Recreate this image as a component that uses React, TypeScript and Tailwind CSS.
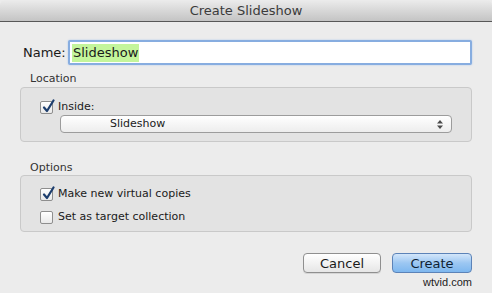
import React from "react";

const font = { fontFamily: '"DejaVu Sans", "Liberation Sans", sans-serif' };

const Check = ({ checked }: { checked: boolean }) => (
  <div className="relative w-[13px] h-[13px] rounded-[2px] border border-[#8e8e8e] bg-gradient-to-b from-white to-[#e9e9e9] shadow-[inset_0_1px_0_#fff]">
    {checked && (
      <svg
        className="absolute left-[1px] top-[-3px]"
        width="13"
        height="14"
        viewBox="0 0 13 14"
      >
        <path
          d="M2 8.5 L5 12 L11.5 1.5"
          fill="none"
          stroke="#1d3e6e"
          strokeWidth="2.2"
          strokeLinecap="round"
          strokeLinejoin="round"
        />
      </svg>
    )}
  </div>
);

export default function App() {
  return (
    <div className="w-[492px] h-[293px] bg-[#ececec] text-[#1a1a1a] overflow-hidden" style={font}>
      <div className="h-[22px] flex items-center justify-center bg-gradient-to-b from-[#ececec] to-[#c4c4c4] border-b border-[#585858] rounded-t-[5px]">
        <span className="text-[13px] text-[#3b3b3b] leading-none">Create Slideshow</span>
      </div>

      <div className="px-[20px]">
        <div className="flex items-center mt-[18px] h-[25px]">
          <span className="ml-[3px] w-[45px] text-[13px]">Name:</span>
          <div className="flex-1 h-[25px] border-[2px] border-[#87ade0] rounded-[2px] bg-white flex items-center shadow-[0_0_2px_#a9c6ec]">
            <span className="ml-[2px] px-[1px] bg-[#c4f59b] text-[13px] leading-[18px]">Slideshow</span>
          </div>
        </div>

        <div className="ml-[10px] mt-[6px] text-[11px] leading-[16px] text-[#333]">Location</div>
        <div className="h-[55px] rounded-[4px] border border-[#c9c9c9] bg-[#e3e3e3] pl-[19px] pr-[19px] pt-[12px]">
          <div className="flex items-center h-[14px] gap-[5px]">
            <Check checked />
            <span className="text-[11px]">Inside:</span>
          </div>
          <div className="ml-[20px] mt-[1px] h-[18px] rounded-[4px] border border-[#9c9c9c] bg-gradient-to-b from-white to-[#ededed] flex items-center relative">
            <span className="ml-[49px] text-[11px]">Slideshow</span>
            <svg className="absolute right-[8px] top-[4px]" width="6" height="9" viewBox="0 0 6 9">
              <path d="M3 0 L6 3.5 L0 3.5 Z M0 5.5 L6 5.5 L3 9 Z" fill="#4a4a4a" />
            </svg>
          </div>
        </div>

        <div className="ml-[10px] mt-[19px] text-[11px] leading-[14px] text-[#333]">Options</div>
        <div className="h-[57px] rounded-[4px] border border-[#c9c9c9] bg-[#e3e3e3] pl-[19px] pt-[11px]">
          <div className="flex items-center h-[14px] gap-[5px]">
            <Check checked />
            <span className="text-[11px]">Make new virtual copies</span>
          </div>
          <div className="flex items-center h-[14px] gap-[5px] mt-[9px]">
            <Check checked={false} />
            <span className="text-[11px]">Set as target collection</span>
          </div>
        </div>

        <div className="flex justify-end gap-[11px] mt-[21px]">
          <button className="w-[78px] h-[20px] rounded-[4px] border border-[#8f8f8f] bg-gradient-to-b from-white to-[#e6e6e6] text-[13px] leading-none shadow-[0_1px_0_#d5d5d5]">
            Cancel
          </button>
          <div className="flex flex-col items-end">
            <button className="w-[80px] h-[20px] rounded-[4px] border border-[#5c83b8] bg-gradient-to-b from-[#d3e6fa] via-[#9cc7f2] to-[#7db7ef] text-[13px] leading-none text-[#0f1f33]">
              Create
            </button>
            <span className="mt-[3px] text-[11px] leading-[13px] text-[#222]" style={{ fontFamily: '"Liberation Sans", sans-serif' }}>
              wtvid.com
            </span>
          </div>
        </div>
      </div>
    </div>
  );
}
